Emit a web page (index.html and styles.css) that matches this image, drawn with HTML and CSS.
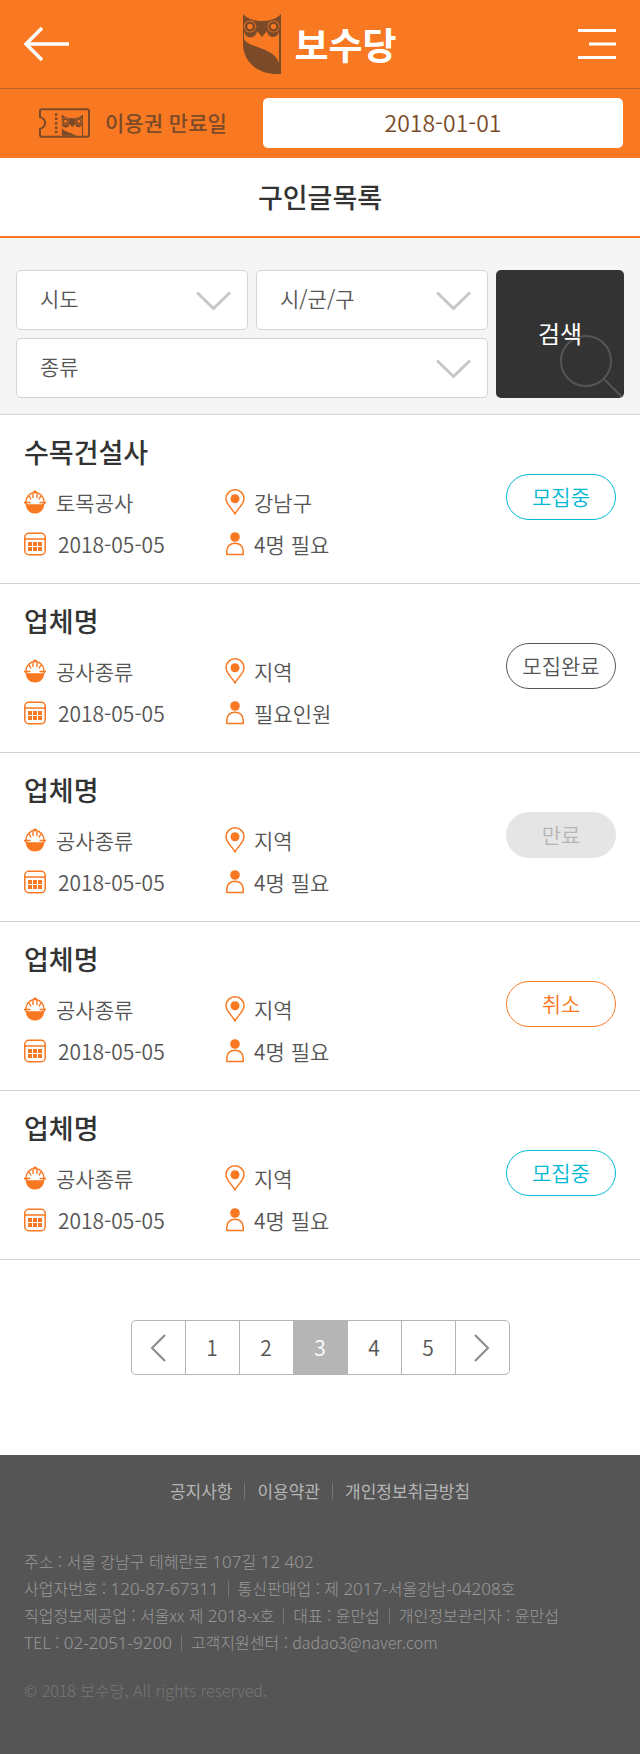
FILE: index.html
```html
<!DOCTYPE html>
<html lang="ko">
<head>
<meta charset="utf-8">
<meta name="viewport" content="width=device-width, initial-scale=1">
<title>보수당 - 구인글목록</title>
<link rel="stylesheet" href="styles.css">
</head>
<body>
<svg class="sprite" aria-hidden="true">
  <symbol id="i-owl" viewBox="0 0 38 60">
    <path fill="currentColor" fill-rule="evenodd" d="M0 0C4 4 9 7 19 7S34 4 38 0V60H34C14 60 0 47 0 30ZM1 17V25C5 34 31 33 36 49V17A6 6 0 0 1 24 17L19 23L14 17A6 6 0 0 1 1 17Z"/>
    <circle cx="7" cy="12.500" r="6.500" fill="#f97822" stroke="currentColor"/>
    <circle cx="30.500" cy="12.500" r="6.500" fill="#f97822" stroke="currentColor"/>
    <circle cx="7" cy="12.500" r="4" fill="none" stroke="currentColor" stroke-width="2.500"/>
    <circle cx="30.500" cy="12.500" r="4" fill="none" stroke="currentColor" stroke-width="2.500"/>
    <path fill="currentColor" d="M13 8H25L19 23Z"/>
  </symbol>
  <symbol id="i-helmet" viewBox="0 0 22 24">
    <path d="M2 12A9 9.500 0 0 1 20 12M5.200 6L7 9.500M16.800 6L15 9.500M9 2.500V8M13 2.500V8" fill="none" stroke="currentColor" stroke-width="1.400"/>
    <path d="M9 1.500Q11 -.5 13 1.500V3H9Z" fill="currentColor"/>
    <path d="M0 12.500H6.500M15.500 12.500H22" stroke="currentColor" stroke-width="1.600"/>
    <path d="M0 12L4 14.200H18L22 12L20.200 15C19.500 20.500 16 23.500 11 23.500S2.500 20.500 1.800 15Z" fill="currentColor"/>
  </symbol>
  <symbol id="i-cal" viewBox="0 0 22 24">
    <rect x=".8" y="1.300" width="20.400" height="21.400" rx="4" fill="none" stroke="currentColor" stroke-width="1.500"/>
    <path d="M1 7H21" stroke="currentColor" stroke-width="1.500"/>
    <path d="M4 10h4v4H4zM9 10h4v4H9zM14 10h4v4h-4zM4 15h4v4H4zM9 15h4v4H9zM14 15h4v4h-4z" fill="currentColor"/>
  </symbol>
  <symbol id="i-pin" viewBox="0 0 20 26">
    <path d="M10 24.800C7 19.500 1 15 1 9.700A9 8.900 0 0 1 19 9.700C19 15 13 19.500 10 24.800Z" fill="none" stroke="currentColor" stroke-width="1.500"/>
    <circle cx="10" cy="9.700" r="4.500" fill="currentColor"/>
  </symbol>
  <symbol id="i-man" viewBox="0 0 20 24">
    <circle cx="10" cy="5" r="4.800" fill="currentColor"/>
    <path d="M1.800 22.500V19C1.800 8.500 18.200 8.500 18.200 19V22.500Z" fill="none" stroke="currentColor" stroke-width="1.500" stroke-linejoin="round"/>
  </symbol>
</svg>

<header class="top">
  <a class="back" href="#" aria-label="뒤로"><svg width="45" height="34" viewBox="0 0 45 34" fill="none" stroke="currentColor" stroke-width="3.500"><path d="M45 17H2M18 1L2 17L18 33"/></svg></a>
  <a class="logo" href="#"><svg width="38" height="60"><use href="#i-owl"/></svg><span>보수당</span></a>
  <button class="menu" type="button" aria-label="메뉴"><svg width="38" height="32" viewBox="0 0 38 32" stroke="currentColor" stroke-width="3"><path d="M0 2.500H38M11 16H38M0 29.500H38"/></svg></button>
</header>

<div class="pass">
  <label class="pass-label" for="expire">
    <svg width="51" height="30" viewBox="0 0 52 30"><path d="M3 1H49Q51 1 51 3V27Q51 29 49 29H3Q1 29 1 27V21C8 19 8 11 1 9V3Q1 1 3 1Z" fill="none" stroke="currentColor" stroke-width="2"/><path d="M17.500 5V26" stroke="currentColor" stroke-width="2.500" stroke-dasharray="2.500 2"/><svg x="23" y="6" width="22" height="22" viewBox="0 0 38 38" preserveAspectRatio="none"><use href="#i-owl" width="38" height="60"/></svg></svg>
    <span>이용권 만료일</span>
  </label>
  <input class="pass-date" id="expire" type="text" value="2018-01-01" readonly>
</div>

<main>
  <h1 class="title">구인글목록</h1>

  <form class="search">
    <div class="pick"><select aria-label="시도"><option>시도</option></select><svg width="35" height="20" viewBox="0 0 35 20"><path d="M1 1.500L17.500 17.500L34 1.500"/></svg></div>
    <div class="pick"><select aria-label="시/군/구"><option>시/군/구</option></select><svg width="35" height="20" viewBox="0 0 35 20"><path d="M1 1.500L17.500 17.500L34 1.500"/></svg></div>
    <div class="pick wide"><select aria-label="종류"><option>종류</option></select><svg width="35" height="20" viewBox="0 0 35 20"><path d="M1 1.500L17.500 17.500L34 1.500"/></svg></div>
    <button class="go" type="button"><svg width="64" height="64" viewBox="0 0 64 64" fill="none" stroke="#555" stroke-width="2"><circle cx="26" cy="27" r="25"/><path d="M44 45L63 64"/></svg><span>검색</span></button>
  </form>

  <ul class="jobs">
    <li class="job">
      <div class="info">
        <h2>수목건설사</h2>
        <div class="facts">
          <span><svg width="22" height="24"><use href="#i-helmet"/></svg>토목공사</span>
          <span><svg width="20" height="26"><use href="#i-pin"/></svg>강남구</span>
          <span><svg width="22" height="24"><use href="#i-cal"/></svg><time>2018-05-05</time></span>
          <span><svg width="20" height="24"><use href="#i-man"/></svg>4명 필요</span>
        </div>
      </div>
      <a class="badge open" href="#">모집중</a>
    </li>
    <li class="job">
      <div class="info">
        <h2>업체명</h2>
        <div class="facts">
          <span><svg width="22" height="24"><use href="#i-helmet"/></svg>공사종류</span>
          <span><svg width="20" height="26"><use href="#i-pin"/></svg>지역</span>
          <span><svg width="22" height="24"><use href="#i-cal"/></svg><time>2018-05-05</time></span>
          <span><svg width="20" height="24"><use href="#i-man"/></svg>필요인원</span>
        </div>
      </div>
      <a class="badge" href="#">모집완료</a>
    </li>
    <li class="job">
      <div class="info">
        <h2>업체명</h2>
        <div class="facts">
          <span><svg width="22" height="24"><use href="#i-helmet"/></svg>공사종류</span>
          <span><svg width="20" height="26"><use href="#i-pin"/></svg>지역</span>
          <span><svg width="22" height="24"><use href="#i-cal"/></svg><time>2018-05-05</time></span>
          <span><svg width="20" height="24"><use href="#i-man"/></svg>4명 필요</span>
        </div>
      </div>
      <a class="badge expired" href="#">만료</a>
    </li>
    <li class="job">
      <div class="info">
        <h2>업체명</h2>
        <div class="facts">
          <span><svg width="22" height="24"><use href="#i-helmet"/></svg>공사종류</span>
          <span><svg width="20" height="26"><use href="#i-pin"/></svg>지역</span>
          <span><svg width="22" height="24"><use href="#i-cal"/></svg><time>2018-05-05</time></span>
          <span><svg width="20" height="24"><use href="#i-man"/></svg>4명 필요</span>
        </div>
      </div>
      <a class="badge cancel" href="#">취소</a>
    </li>
    <li class="job">
      <div class="info">
        <h2>업체명</h2>
        <div class="facts">
          <span><svg width="22" height="24"><use href="#i-helmet"/></svg>공사종류</span>
          <span><svg width="20" height="26"><use href="#i-pin"/></svg>지역</span>
          <span><svg width="22" height="24"><use href="#i-cal"/></svg><time>2018-05-05</time></span>
          <span><svg width="20" height="24"><use href="#i-man"/></svg>4명 필요</span>
        </div>
      </div>
      <a class="badge open" href="#">모집중</a>
    </li>
  </ul>

  <nav class="pages" aria-label="페이지">
    <a href="#" aria-label="이전"><svg width="16" height="28" viewBox="0 0 16 28"><path d="M15 1L2 14L15 27"/></svg></a>
    <a href="#">1</a>
    <a href="#">2</a>
    <a class="on" href="#" aria-current="page">3</a>
    <a href="#">4</a>
    <a href="#">5</a>
    <a href="#" aria-label="다음"><svg width="16" height="28" viewBox="0 0 16 28"><path d="M1 1L14 14L1 27"/></svg></a>
  </nav>
</main>

<footer class="foot">
  <nav class="links">
    <a href="#">공지사항</a><a href="#">이용약관</a><a href="#">개인정보취급방침</a>
  </nav>
  <address class="company">
    <p><span>주소 : 서울 강남구 테헤란로 <b>107</b>길 <b>12 402</b></span></p>
    <p><span>사업자번호 : <b>120-87-67311</b></span><span>통신판매업 : 제 <b>2017-</b>서울강남<b>-04208</b>호</span></p>
    <p><span>직업정보제공업 : 서울xx 제 <b>2018-</b>x호</span><span>대표 : 윤만섭</span><span>개인정보관리자 : 윤만섭</span></p>
    <p><span>TEL : <b>02-2051-9200</b></span><span>고객지원센터 : dadao3@naver.com</span></p>
  </address>
  <p class="copy">© 2018 보수당, All rights reserved.</p>
</footer>
</body>
</html>
```
FILE: styles.css
```css
* { box-sizing: border-box; margin: 0; padding: 0; }
body { font-family: "Noto Sans CJK KR", sans-serif; font-weight: 350; font-size: 21px; color: #555; background: #fff; }
a { color: inherit; text-decoration: none; }
button, input, select { font: inherit; color: inherit; border: 0; }
svg { display: block; flex: none; }
.sprite { position: absolute; width: 0; height: 0; }

.top { display: grid; grid-template-columns: 1fr auto 1fr; align-items: center; height: 89px; padding: 0 24px; background: #f97822; border-bottom: 1px solid #b5602a; color: #fff; }
.logo { display: flex; align-items: center; gap: 13px; font-size: 37px; font-weight: 700; line-height: 60px; }
.logo svg { color: #7b4a28; }
.menu { justify-self: end; background: none; }

.pass { display: grid; grid-template-columns: 224px 1fr; align-items: center; padding: 9px 17px 10px 39px; background: #f97822; color: #7b4a28; }
.pass-label { display: flex; align-items: center; gap: 15px; font-weight: 500; }
.pass-label span { padding-bottom: 3px; }
.pass-date { width: 100%; height: 50px; padding-bottom: 3px; border-radius: 5px; background: #fff; text-align: center; font-size: 23px; }

.title { border-bottom: 2px solid #f97822; font-size: 27px; font-weight: 500; line-height: 78px; text-align: center; color: #333; }

.search { display: grid; grid-template-columns: 1fr 1fr 128px; gap: 8px; padding: 32px 16px 16px; background: #f5f5f5; border-bottom: 1px solid #d3d3d3; }
.pick { position: relative; }
.pick select { display: block; width: 100%; height: 60px; padding: 0 64px 4px 23px; border: 1px solid #d3d3d3; border-radius: 5px; background: #fff; appearance: none; }
.pick svg { position: absolute; right: 17px; top: 21px; fill: none; stroke: #c6c6c6; stroke-width: 3; pointer-events: none; }
.wide { grid-column: 1 / 3; }
.go { position: relative; grid-column: 3; grid-row: 1 / 3; padding-bottom: 4px; border-radius: 5px; background: #333; color: #fff; font-size: 24px; font-weight: 400; overflow: hidden; }
.go svg { position: absolute; right: 0; bottom: 0; }
.go span { position: relative; }

.jobs { list-style: none; }
.job { display: flex; align-items: center; padding: 13px 24px 18px; border-bottom: 1px solid #d3d3d3; }
.info { flex: 1; }
.info h2 { margin-bottom: 5px; font-size: 27px; font-weight: 500; line-height: 48px; color: #333; }
.facts { display: grid; grid-template-columns: 201px 1fr; line-height: 42px; }
.facts span { display: flex; align-items: center; gap: 9px; }
.facts span:nth-child(odd) { gap: 10px; }
.facts time { padding-left: 2px; }
.facts svg { color: #f97822; }
.badge { width: 110px; padding-bottom: 2px; border: 1px solid #555; border-radius: 23px; line-height: 42px; text-align: center; }
.open { border-color: #00b8d4; color: #00b8d4; }
.expired { border-color: #e5e5e5; background: #e5e5e5; color: #b5b5b5; }
.cancel { border-color: #f97822; color: #f97822; }

.pages { display: flex; width: max-content; margin: 60px auto 80px; border: 1px solid #b5b5b5; border-radius: 5px; overflow: hidden; line-height: 53px; }
.pages a { display: grid; place-items: center; width: 54px; height: 53px; border-right: 1px solid #b5b5b5; }
.pages a:last-child { width: 53px; border-right: 0; }
.pages .on { background: #b5b5b5; color: #fff; }
.pages svg { fill: none; stroke: #8a8a8a; stroke-width: 2; }

.foot { padding: 24px 24px 50px; background: #555; color: #999; font-size: 16px; font-weight: 300; line-height: 27px; }
.links { display: flex; justify-content: center; margin-bottom: 45px; color: #b5b5b5; font-size: 17px; font-weight: 400; line-height: 24px; }
.links a { display: flex; align-items: center; }
.links a + a::before, .company span + span::before { content: ""; display: inline-block; width: 1px; height: 16px; margin: 0 12px; background: #777; }
.company { font-style: normal; }
.company p { display: flex; flex-wrap: wrap; line-height: 27px; height: 27px; }
.company b { font-family: "Noto Sans", sans-serif; font-size: 17px; font-weight: 300; line-height: 1; }
.company span + span::before { margin: 0 9px; vertical-align: -2px; }
.copy { margin-top: 21px; color: #777; }
```
